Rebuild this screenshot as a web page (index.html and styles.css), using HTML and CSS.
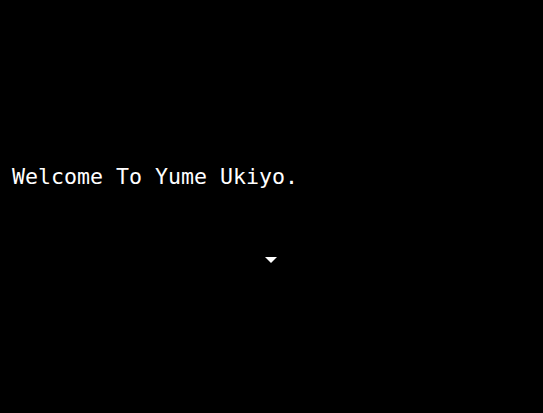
FILE: index.html
```html
<!DOCTYPE html>
<html>
<head>
<meta charset="utf-8">
<link rel="stylesheet" href="styles.css">
</head>
<body>
<main class="screen">
  <p class="message">Welcome To Yume Ukiyo.</p>
  <div class="next"><span class="arrow"></span></div>
</main>
</body>
</html>
```
FILE: styles.css
```css
html, body {
  margin: 0;
  padding: 0;
  background: #000;
}
.screen {
  width: 543px;
  height: 413px;
  background: #000;
  box-sizing: border-box;
  padding: 161px 0 0 12px;
  display: flex;
  flex-direction: column;
}
.message {
  margin: 0;
  color: #fff;
  font-family: "DejaVu Sans Mono", monospace;
  font-size: 21.6px;
  line-height: 32px;
}
.next {
  margin-top: 64px;
  padding-left: 253px;
  height: 6px;
  display: flex;
}
.arrow {
  width: 0;
  height: 0;
  border-left: 6px solid transparent;
  border-right: 6px solid transparent;
  border-top: 6px solid #fff;
}
```
